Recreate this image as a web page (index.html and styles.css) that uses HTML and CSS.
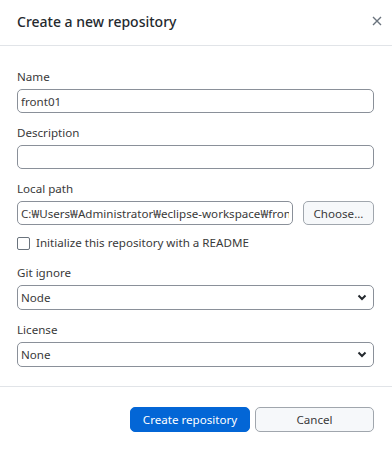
FILE: index.html
```html
<!DOCTYPE html>
<html lang="en">
<head>
    <meta charset="UTF-8">
    <meta name="viewport" content="width=device-width, initial-scale=1.0">
    <title>Create a new repository</title>
    <link rel="stylesheet" href="styles.css">
</head>
<body>
    <div class="dialog">
        <!-- 标题栏 -->
        <div class="dialog-header">
            <h3>Create a new repository</h3>
            <button class="close-btn" aria-label="Close">
                <svg width="10" height="10" viewBox="0 0 10 10">
                    <path d="M1 1 L9 9 M9 1 L1 9" stroke="#6a737d" stroke-width="1.4" fill="none"/>
                </svg>
            </button>
        </div>

        <!-- 表单 -->
        <div class="dialog-body">
            <div class="field">
                <label>Name</label>
                <input class="text-input" type="text" value="front01">
            </div>
            <div class="field">
                <label>Description</label>
                <input class="text-input" type="text" value="">
            </div>
            <div class="field">
                <label>Local path</label>
                <div class="path-row">
                    <input class="text-input path-input" type="text" value="C:₩Users₩Administrator₩eclipse-workspace₩front01">
                    <button class="btn choose-btn">Choose...</button>
                </div>
            </div>
            <label class="check-row">
                <span class="check-box"></span>
                Initialize this repository with a README
            </label>
            <div class="field">
                <label>Git ignore</label>
                <div class="select">
                    <span>Node</span>
                    <svg width="10" height="7" viewBox="0 0 10 7"><path d="M1.5 1.5 L5 5 L8.5 1.5" stroke="#24292e" stroke-width="2" fill="none"/></svg>
                </div>
            </div>
            <div class="field">
                <label>License</label>
                <div class="select">
                    <span>None</span>
                    <svg width="10" height="7" viewBox="0 0 10 7"><path d="M1.5 1.5 L5 5 L8.5 1.5" stroke="#24292e" stroke-width="2" fill="none"/></svg>
                </div>
            </div>
        </div>

        <!-- 底部按钮 -->
        <div class="dialog-footer">
            <button class="btn primary-btn">Create repository</button>
            <button class="btn cancel-btn">Cancel</button>
        </div>
    </div>
</body>
</html>
```

FILE: styles.css
```css
body {
    margin: 0;
    background: #fff;
    font-family: "Noto Sans", "Noto Sans CJK KR", sans-serif;
    font-size: 11.6px;
    color: #24292e;
}

.dialog {
    width: 392px;
    height: 449px;
    background: #fff;
}

/* 标题栏 */
.dialog-header {
    height: 46px;
    border-bottom: 1px solid #e1e4e8;
    display: flex;
    align-items: center;
    justify-content: space-between;
    padding: 0 7px 0 17px;
    box-sizing: border-box;
}

.dialog-header h3 {
    margin: 0 0 3px;
    font-size: 14px;
    font-weight: 500;
    color: #24292e;
}

.close-btn {
    border: none;
    background: none;
    padding: 0;
    width: 16px;
    height: 16px;
    display: flex;
    align-items: center;
    justify-content: center;
    margin-bottom: 4px;
}

/* 表单区域 */
.dialog-body {
    padding: 23px 18px 7px 17px;
    border-bottom: 1px solid #e1e4e8;
}

.field {
    margin-bottom: 12px;
}

.field label {
    display: block;
    line-height: 16px;
    margin-bottom: 4px;
    color: #3a3a3a;
}

.text-input,
.select {
    width: 100%;
    height: 24px;
    box-sizing: border-box;
    border: 1px solid #8a9099;
    border-radius: 5px;
    padding: 0 3px;
    font-family: inherit;
    font-size: 11.6px;
    color: #3a3a3a;
    background: #fff;
}

.path-row {
    display: flex;
    gap: 10px;
}

.path-input {
    flex: 1;
    min-width: 0;
}

.btn {
    font-family: inherit;
    font-size: 11.6px;
    height: 24px;
    border-radius: 5px;
    padding: 0;
    cursor: pointer;
}

.choose-btn {
    width: 71px;
    border: 1px solid #a0a6ad;
    background: #f6f8fa;
    color: #3a3a3a;
}

/* 复选框 */
.check-row {
    display: flex;
    align-items: center;
    gap: 6px;
    line-height: 16px;
    margin: -2px 0 14px;
    color: #3a3a3a;
}

.check-box {
    width: 11px;
    height: 11px;
    border: 1px solid #6a737d;
    border-radius: 2px;
}

/* 下拉框 */
.select {
    height: 25px;
    display: flex;
    align-items: center;
    justify-content: space-between;
    padding: 0 6px 0 3px;
}

/* 底部按钮 */
.dialog-footer {
    display: flex;
    justify-content: flex-end;
    gap: 5px;
    padding: 20px 18px 0 0;
}

.primary-btn {
    width: 120px;
    height: 25px;
    border: 1px solid #0366d6;
    background: #0366d6;
    color: #fff;
}

.cancel-btn {
    width: 119px;
    height: 25px;
    border: 1px solid #a0a6ad;
    background: #f6f8fa;
    color: #3a3a3a;
}
```
